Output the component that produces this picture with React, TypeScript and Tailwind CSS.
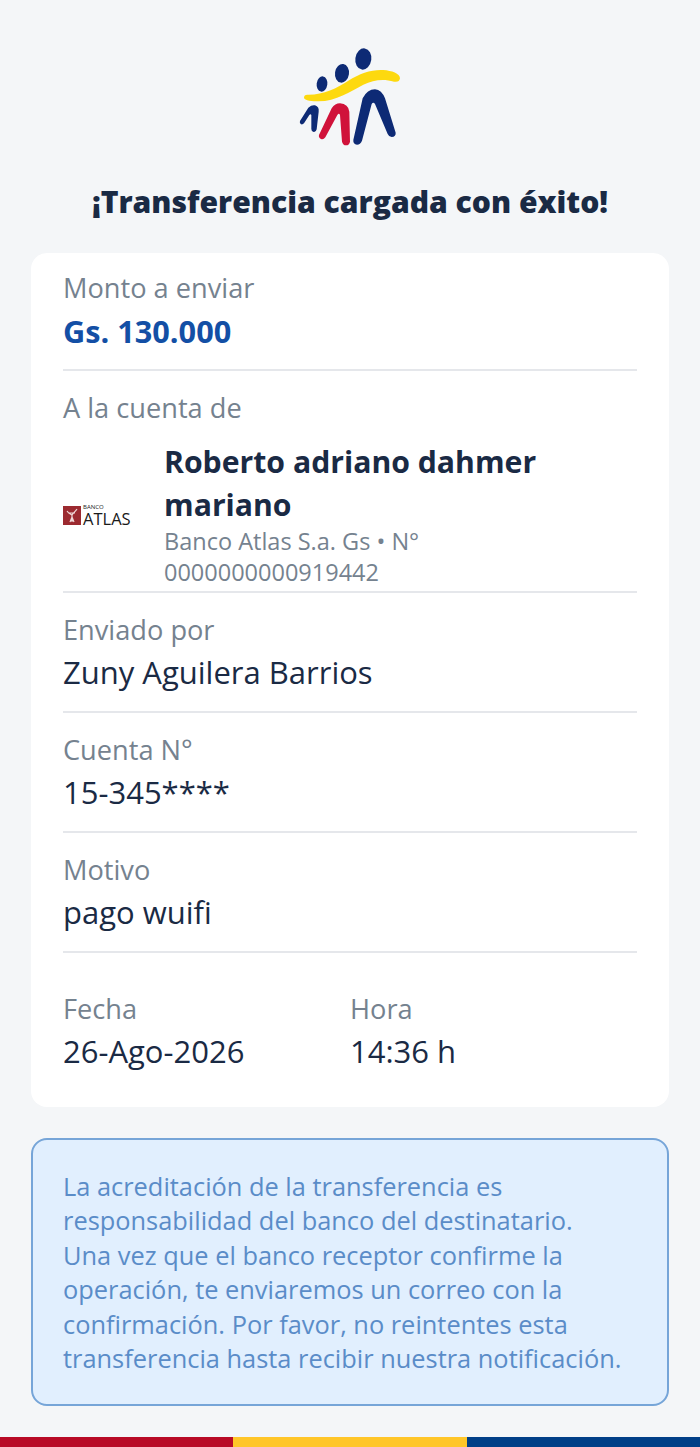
import React from "react";

function Logo() {
  return (
    <svg width="140" height="130" viewBox="0 0 420 390" className="block">
      <ellipse cx="250" cy="87" rx="24" ry="32" fill="#0d2a75" transform="rotate(8 250 87)" />
      <ellipse cx="186" cy="130" rx="21" ry="28" fill="#0d2a75" transform="rotate(8 186 130)" />
      <ellipse cx="126" cy="162" rx="16" ry="23" fill="#0d2a75" transform="rotate(8 126 162)" />
      <path d="M60 273 L85 233 Q95 224 105 226 Q118 230 116 245 L110 298 Q108 307 101 306 Q94 305 94 297 L94 255 Q92 250 88 255 L72 280 Q67 285 62 282 Q58 278 60 273Z" fill="#0d2a75" />
      <path d="M117 315 L155 235 Q165 220 180 220 Q205 222 208 245 L210 335 Q208 346 198 346 Q189 346 186 335 L180 255 Q177 248 172 255 L136 322 Q130 330 123 327 Q115 323 117 315Z" fill="#d0123a" />
      <path d="M220 330 L248 205 Q262 178 285 178 Q305 180 315 205 L347 308 Q348 320 335 321 Q327 321 323 312 L285 222 Q280 215 275 222 L246 332 Q241 344 231 344 Q219 343 220 330Z" fill="#0d2a75" />
      <path d="M72 203 Q72 194 82 194 C130 195 170 175 205 152 C240 130 275 118 310 120 C335 122 360 130 360 145 Q358 158 342 155 C310 146 280 150 250 164 C210 185 170 213 115 214 C100 214 72 212 72 203Z" fill="#fdd90f" />
    </svg>
  );
}

function Atlas() {
  return (
    <div className="flex items-center gap-[2px] w-[69px] shrink-0 mt-[2px] text-[#1a1a1a]">
      <div className="w-[18px] h-[19px] bg-[#9c2a30] flex items-center justify-center shrink-0">
        <svg width="12" height="15" viewBox="0 0 12 15" fill="none">
          <path d="M1 3 C3 6 5 6 6 7 C7 5 9 4 11 1 M6 7 V14 M4 14 L6 9 L8 14 M3 5 L9 5" stroke="#f0d9d9" strokeWidth="1.2" />
        </svg>
      </div>
      <div className="flex flex-col">
        <span className="text-[6px] leading-[7px] font-medium">BANCO</span>
        <span className="text-[16.5px] leading-[16px] font-medium">ATLAS</span>
      </div>
    </div>
  );
}

function Row({ label, value }: { label: string; value: string }) {
  return (
    <div className="h-[120px] border-b-2 border-[#e5e7eb] pt-[15px]">
      <div className="text-[27.2px] leading-[43px] text-[#75828f]">{label}</div>
      <div className="text-[31px] leading-[43px] font-medium text-[#1a2a44]">{value}</div>
    </div>
  );
}

export default function App() {
  return (
    <div className="w-[700px] h-[1447px] bg-[#f4f6f8] flex flex-col font-['Open_Sans',sans-serif] overflow-hidden">
      <div className="flex-1 px-[31px] flex flex-col">
        <div className="flex justify-center pt-[30px]">
          <Logo />
        </div>
        <h1 className="mt-[20px] text-center text-[30.1px] leading-[43px] font-extrabold text-[#1a2a44]">¡Transferencia cargada con éxito!</h1>
        <div className="mt-[30px] h-[854px] bg-white rounded-[16px] px-[32px] flex flex-col">
          <div className="h-[118px] border-b-2 border-[#e5e7eb] pt-[13px]">
            <div className="text-[27.2px] leading-[43px] text-[#75828f]">Monto a enviar</div>
            <div className="text-[30.7px] leading-[44px] font-bold text-[#134fa5]">Gs. 130.000</div>
          </div>
          <div className="h-[222px] border-b-2 border-[#e5e7eb] pt-[15px]">
            <div className="text-[27.2px] leading-[43px] text-[#75828f]">A la cuenta de</div>
            <div className="flex items-center gap-[32px] pt-[12px]">
              <Atlas />
              <div className="flex-1">
                <div className="text-[30.2px] leading-[42.5px] font-bold text-[#1a2a44]">Roberto adriano dahmer mariano</div>
                <div className="text-[23.5px] leading-[31px] text-[#75828f]">Banco Atlas S.a. Gs • N° 0000000000919442</div>
              </div>
            </div>
          </div>
          <Row label="Enviado por" value="Zuny Aguilera Barrios" />
          <Row label="Cuenta N°" value="15-345****" />
          <Row label="Motivo" value="pago wuifi" />
          <div className="grid grid-cols-2 pt-[34px]">
            <div>
              <div className="text-[27.2px] leading-[43px] text-[#75828f]">Fecha</div>
              <div className="text-[31px] leading-[43px] font-medium text-[#1a2a44]">26-Ago-2026</div>
            </div>
            <div>
              <div className="text-[27.2px] leading-[43px] text-[#75828f]">Hora</div>
              <div className="text-[31px] leading-[43px] font-medium text-[#1a2a44]">14:36 h</div>
            </div>
          </div>
        </div>
        <div className="mt-[31px] h-[268px] bg-[#e1effe] border-2 border-[#76a5d8] rounded-[16px] pl-[30px] pr-[42px] pt-[29px] text-[25.4px] leading-[34.4px] text-[#5a8cc8]">
          La acreditación de la transferencia es responsabilidad del banco del destinatario. Una vez que el banco receptor confirme la operación, te enviaremos un correo con la confirmación. Por favor, no reintentes esta transferencia hasta recibir nuestra notificación.
        </div>
      </div>
      <div className="flex h-[10px]">
        <div className="w-[233px] bg-[#b80a26]" />
        <div className="w-[234px] bg-[#ffc629]" />
        <div className="flex-1 bg-[#003f87]" />
      </div>
    </div>
  );
}
